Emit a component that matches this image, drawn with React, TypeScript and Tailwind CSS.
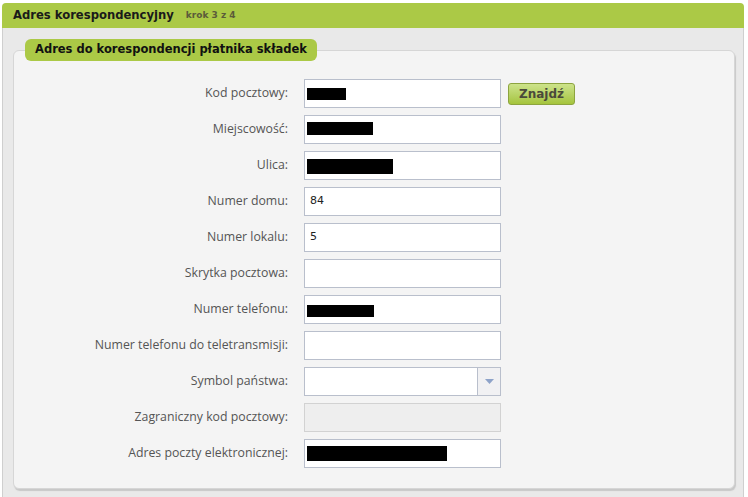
const rows: { label: string; kind: "text" | "select" | "disabled"; value?: string; mask?: [number, number, number]; button?: boolean }[] = [
  { label: "Kod pocztowy:", kind: "text", mask: [39, 12, 9], button: true },
  { label: "Miejscowość:", kind: "text", mask: [66, 13, 7] },
  { label: "Ulica:", kind: "text", mask: [86, 15, 8] },
  { label: "Numer domu:", kind: "text", value: "84" },
  { label: "Numer lokalu:", kind: "text", value: "5" },
  { label: "Skrytka pocztowa:", kind: "text" },
  { label: "Numer telefonu:", kind: "text", mask: [67, 12, 10] },
  { label: "Numer telefonu do teletransmisji:", kind: "text" },
  { label: "Symbol państwa:", kind: "select" },
  { label: "Zagraniczny kod pocztowy:", kind: "disabled" },
  { label: "Adres poczty elektronicznej:", kind: "text", mask: [140, 15, 7] },
];

function Field({ row }: { row: (typeof rows)[number] }) {
  if (row.kind === "disabled") {
    return <div className="w-[197px] h-[29px] border border-[#d2d2d2] bg-[#eeeeee]" />;
  }
  if (row.kind === "select") {
    return (
      <div className="w-[197px] h-[29px] border border-[#b9bfcc] bg-white flex">
        <div className="flex-1" />
        <div className="w-[23px] border-l border-[#b9bfcc] bg-[#f1f1f3] flex items-center justify-center">
          <svg width="9" height="5" viewBox="0 0 9 5">
            <path d="M0 0h9L4.5 5z" fill="#8ea3c9" />
          </svg>
        </div>
      </div>
    );
  }
  return (
    <div className="w-[197px] h-[29px] border border-[#b9bfcc] bg-white relative pl-[5px] flex items-center text-[11px] text-[#222] font-['DejaVu_Sans',sans-serif]">
      {row.value}
      {row.mask && (
        <div
          className="absolute left-[2px] bg-black"
          style={{ width: row.mask[0], height: row.mask[1], top: row.mask[2] - 1 }}
        />
      )}
    </div>
  );
}

export default function App() {
  return (
    <div className="w-[748px] h-[497px] bg-white pt-[3px] pl-[2px] overflow-hidden">
      <div className="w-[742px]">
        <div className="h-[25px] bg-[#abc946] rounded-t-[4px] flex items-center pl-[11px] gap-[12px]">
          <span className="font-['DejaVu_Sans',sans-serif] font-bold text-[11.6px] text-[#1a1a1a]">
            Adres korespondencyjny
          </span>
          <span className="font-['DejaVu_Sans',sans-serif] font-bold text-[9px] text-[#5b5b3a] pt-[1px]">krok 3 z 4</span>
        </div>
        <div className="h-[469px] bg-[#e9e9e9] border-l border-r border-[#cfcfcf] pt-[22px] pl-[10px] pr-[8px]">
          <div className="relative h-[439px] bg-[#f4f4f4] border border-[#d6d6d6] rounded-[6px] shadow-[1px_2px_1px_#c8c8c8] pt-[28px]">
            <div className="absolute left-[11px] top-[-12px] h-[22px] px-[10px] bg-[#abc946] rounded-[6px] flex items-center font-['DejaVu_Sans',sans-serif] font-bold text-[11.5px] text-[#111]">
              Adres do korespondencji płatnika składek
            </div>
            <div className="flex flex-col gap-[7px]">
              {rows.map((row) => (
                <div key={row.label} className="flex items-center">
                  <div className="w-[274px] text-right text-[12.3px] text-[#555] font-['Open_Sans',sans-serif]">{row.label}</div>
                  <div className="ml-[16px]">
                    <Field row={row} />
                  </div>
                  {row.button && (
                    <div className="ml-[7px] w-[67px] h-[22px] rounded-[3px] border border-[#8da43f] bg-gradient-to-b from-[#cde38a] to-[#a5c43b] flex items-center justify-center font-['DejaVu_Sans',sans-serif] font-bold text-[12px] text-[#4a4a3a]">
                      Znajdź
                    </div>
                  )}
                </div>
              ))}
            </div>
          </div>
        </div>
      </div>
    </div>
  );
}
